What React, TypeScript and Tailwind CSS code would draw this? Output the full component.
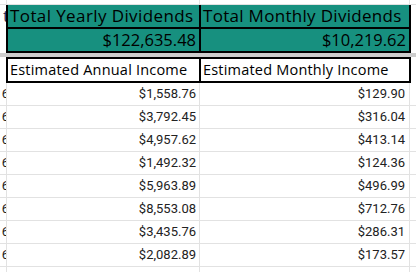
import React from "react";

const annual = ["$1,558.76", "$3,792.45", "$4,957.62", "$1,492.32", "$5,963.89", "$8,553.08", "$3,435.76", "$2,082.89", ""];
const monthly = ["$129.90", "$316.04", "$413.14", "$124.36", "$496.99", "$712.76", "$286.31", "$173.57", ""];

const head = { fontFamily: '"Open Sans", "Liberation Sans", sans-serif' };
const data = { fontFamily: 'Roboto, "Liberation Sans", sans-serif' };

function HeaderRow({
  left,
  right,
  align,
  h,
  size,
  teal,
}: {
  left: string;
  right: string;
  align: "start" | "end";
  h: string;
  size: string;
  teal: boolean;
}) {
  const bg = teal ? "bg-[#17907f]" : "bg-white";
  const j = align === "end" ? "justify-end pr-[3px]" : "justify-start pl-[2px]";
  return (
    <div className={`flex ${h}`}>
      <div className="w-[6px] bg-white" />
      <div className="w-[2px] bg-black" />
      <div className={`w-[191px] ${bg} flex items-center ${j} overflow-hidden whitespace-nowrap text-black ${size}`} style={head}>
        {left}
      </div>
      <div className="w-[2px] bg-black" />
      <div className={`w-[208px] ${bg} flex items-center ${j} overflow-hidden whitespace-nowrap text-black ${size}`} style={head}>
        {right}
      </div>
      <div className="w-[2px] bg-black" />
      <div className="flex-1 bg-white" />
    </div>
  );
}

export default function App() {
  return (
    <div className="w-[416px] h-[272px] overflow-hidden bg-white">
      {/* row 0 */}
      <div className="flex h-[5px] border-b border-[#e2e2e2]">
        <div className="w-[6px]" />
        <div className="w-[1px] bg-[#e2e2e2]" />
        <div className="w-[192px]" />
        <div className="w-[1px] bg-[#e2e2e2]" />
        <div className="w-[209px]" />
        <div className="w-[1px] bg-[#e2e2e2]" />
      </div>
      {/* row 1 */}
      <div className="flex h-[22px]">
        <div className="w-[6px] bg-white overflow-hidden flex items-center justify-end">
          <span className="text-[17px] text-[#1f2d5a] mr-[-3px]" style={head}>t</span>
        </div>
        <div className="w-[2px] bg-black" />
        <div className="w-[191px] bg-[#17907f] flex items-center pl-[2px] overflow-hidden whitespace-nowrap text-black text-[17px] tracking-[0.4px]" style={head}>
          Total Yearly Dividends
        </div>
        <div className="w-[2px] bg-black" />
        <div className="w-[208px] bg-[#17907f] flex items-center pl-[2px] overflow-hidden whitespace-nowrap text-black text-[17px] tracking-[0.3px]" style={head}>
          Total Monthly Dividends
        </div>
        <div className="w-[2px] bg-black" />
        <div className="flex-1 bg-white" />
      </div>
      <div className="h-[2px] bg-black ml-[6px] mr-[5px]" />
      {/* row 2 */}
      <HeaderRow left="$122,635.48" right="$10,219.62" align="end" h="h-[22px]" size="text-[16.5px]" teal />
      <div className="h-[2px] bg-black ml-[6px] mr-[5px]" />
      {/* frozen divider */}
      <div className="h-[4px] bg-[#cdcdcd]" />
      <div className="h-[2px] bg-black ml-[6px] mr-[5px]" />
      {/* row 3 */}
      <HeaderRow left="Estimated Annual Income" right="Estimated Monthly Income" align="start" h="h-[22px]" size="text-[14.5px] tracking-[0.2px]" teal={false} />
      <div className="h-[2px] bg-black ml-[6px] mr-[5px]" />
      {/* data rows */}
      {annual.map((a, i) => (
        <div key={i} className="flex h-[23px] border-b border-[#e2e2e2]">
          <div className="w-[6px] overflow-hidden flex items-center justify-end">
            {a && (
              <span className="text-[13px] text-[#222] mr-[-3px]" style={data}>
                6
              </span>
            )}
          </div>
          <div className="w-[1px] bg-[#e2e2e2]" />
          <div className="w-[192px] flex items-center justify-end pr-[3px] text-[13px] text-[#222] whitespace-nowrap" style={data}>
            {a}
          </div>
          <div className="w-[1px] bg-[#e2e2e2]" />
          <div className="w-[209px] flex items-center justify-end pr-[4px] text-[13px] text-[#222] whitespace-nowrap" style={data}>
            {monthly[i]}
          </div>
          <div className="w-[1px] bg-[#e2e2e2]" />
          <div className="flex-1" />
        </div>
      ))}
    </div>
  );
}
